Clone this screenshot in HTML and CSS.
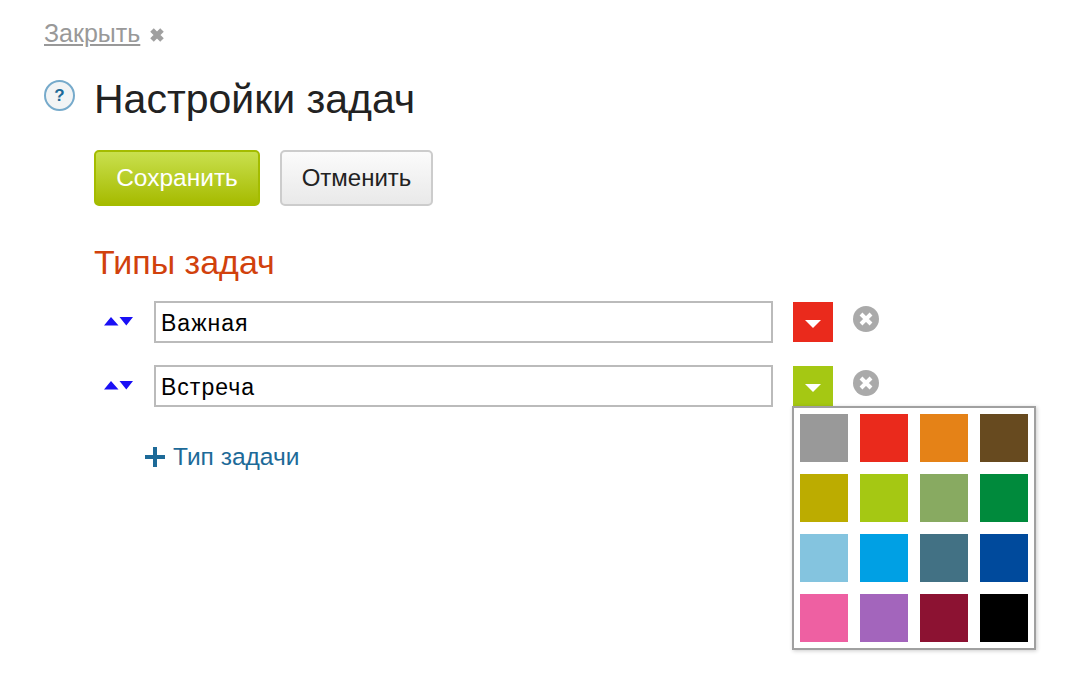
FILE: index.html
```html
<!DOCTYPE html>
<html lang="ru">
<head>
<meta charset="utf-8">
<title>Настройки задач</title>
<link rel="stylesheet" href="styles.css">
</head>
<body>
<div class="page">
  <div class="close-row">
    <a class="close-link" href="#">Закрыть</a>
    <svg class="close-x" width="16" height="16" viewBox="0 0 16 16"><path d="M3 3L13 13M13 3L3 13" stroke="#a0a0a0" stroke-width="5"/></svg>
  </div>
  <div class="title-row">
    <span class="help">?</span>
    <h1 class="title">Настройки задач</h1>
  </div>
  <div class="content">
    <div class="buttons">
      <button class="btn btn-save">Сохранить</button>
      <button class="btn btn-cancel">Отменить</button>
    </div>
    <h2 class="section">Типы задач</h2>
    <div class="type-row">
      <svg class="arrows" width="30" height="10" viewBox="0 0 30 10"><path d="M0 9.500L7 1L14.500 9.500ZM15.500 1H29L22.300 9.500Z" fill="#1a10f5"/></svg>
      <div class="type-input">Важная</div>
      <div class="color-btn red"><i class="tri"></i></div>
      <svg class="remove" width="28" height="28" viewBox="0 0 28 28"><circle cx="14" cy="14" r="13" fill="#aaa"/><path d="M9 9L19 19M19 9L9 19" stroke="#fff" stroke-width="4"/></svg>
    </div>
    <div class="type-row">
      <svg class="arrows" width="30" height="10" viewBox="0 0 30 10"><path d="M0 9.500L7 1L14.500 9.500ZM15.500 1H29L22.300 9.500Z" fill="#1a10f5"/></svg>
      <div class="type-input">Встреча</div>
      <div class="color-btn green"><i class="tri"></i></div>
      <svg class="remove" width="28" height="28" viewBox="0 0 28 28"><circle cx="14" cy="14" r="13" fill="#aaa"/><path d="M9 9L19 19M19 9L9 19" stroke="#fff" stroke-width="4"/></svg>
    </div>
    <a class="add" href="#">
      <svg width="20" height="20" viewBox="0 0 20 20"><path d="M10 0V20M0 10H20" stroke="#1d6a98" stroke-width="4"/></svg>
      <span>Тип задачи</span>
    </a>
  </div>
  <div class="palette">
    <i class="sw c1"></i><i class="sw c2"></i><i class="sw c3"></i><i class="sw c4"></i>
    <i class="sw c5"></i><i class="sw c6"></i><i class="sw c7"></i><i class="sw c8"></i>
    <i class="sw c9"></i><i class="sw c10"></i><i class="sw c11"></i><i class="sw c12"></i>
    <i class="sw c13"></i><i class="sw c14"></i><i class="sw c15"></i><i class="sw c16"></i>
  </div>
</div>
</body>
</html>
```
FILE: styles.css
```css
* { box-sizing: border-box; }
html, body { margin: 0; padding: 0; background: #fff; }
body { font-family: "Liberation Sans", Arial, sans-serif; color: #222; }
.page { position: relative; width: 1076px; height: 686px; padding: 18px 0 0 44px; overflow: hidden; }
.close-row { display: flex; align-items: center; gap: 9px; height: 30px; }
.close-link { font-size: 25px; color: #999; text-decoration: underline; }
.close-x { margin-top: 3px; }
.title-row { display: flex; align-items: center; gap: 19px; margin-top: 26px; height: 50px; }
.help { width: 31px; height: 31px; border-radius: 50%; border: 2px solid #76aacb; background: #f2f4f5; color: #1d6a98; font-size: 17px; font-weight: bold; text-align: center; line-height: 27px; margin-top: -7px; }
.title { margin: 0; font-size: 41px; font-weight: normal; color: #222; }
.content { padding-left: 50px; margin-top: 2px; }
.buttons { display: flex; gap: 20px; margin-top: 26px; }
.btn { height: 56px; border-radius: 5px; font: 24.5px "Liberation Sans", Arial, sans-serif; padding: 0; }
.btn-save { width: 166px; border: 2px solid #a4bc00; background: linear-gradient(#c9e04e, #a6bb00); color: #fff; }
.btn-cancel { width: 153px; border: 2px solid #ccc; background: linear-gradient(#fbfbfb, #e9e9e9); color: #222; font-size: 24px; }
.section { margin: 36px 0 0; font-size: 34px; line-height: 40px; font-weight: normal; color: #d1410c; }
.type-row { display: flex; align-items: center; height: 42px; margin-top: 18px; position: relative; }
.section + .type-row { margin-top: 19px; }
.type-row + .type-row { margin-top: 22px; }
.arrows { margin-left: 10px; margin-right: 20px; margin-top: -2px; }
.type-input { width: 619px; height: 42px; border: 2px solid #bbb; padding: 0 5px; font: 23px/40px "Liberation Sans", Arial, sans-serif; letter-spacing: 1px; color: #000; }
.color-btn { width: 40px; height: 40px; margin-left: 20px; display: flex; align-items: center; justify-content: center; }
.red { background: #ea2a1c; }
.green { background: #a5c813; }
.tri { width: 0; height: 0; border-left: 8px solid transparent; border-right: 8px solid transparent; border-top: 8px solid #fff; margin-top: 3px; }
.remove { margin-left: 19px; margin-top: -7px; }
.add { display: flex; align-items: center; gap: 8px; margin: 36px 0 0 51px; color: #1d6a98; font-size: 24.5px; text-decoration: none; }
.palette { position: absolute; left: 792px; top: 406px; width: 244px; height: 244px; border: 2px solid #a0a0a0; background: #fff; box-shadow: 1px 1px 4px rgba(0,0,0,.2); padding: 6px; display: grid; grid-template-columns: repeat(4, 48px); grid-auto-rows: 48px; gap: 12px; }
.sw { display: block; }
.c1 { background: #999; } .c2 { background: #ea2a1c; } .c3 { background: #e58217; } .c4 { background: #674a1f; }
.c5 { background: #bcac00; } .c6 { background: #a5c813; } .c7 { background: #88aa61; } .c8 { background: #008a3c; }
.c9 { background: #84c4df; } .c10 { background: #00a0e4; } .c11 { background: #427184; } .c12 { background: #004a9c; }
.c13 { background: #ee60a2; } .c14 { background: #a365bc; } .c15 { background: #8c1232; } .c16 { background: #000; }
```
